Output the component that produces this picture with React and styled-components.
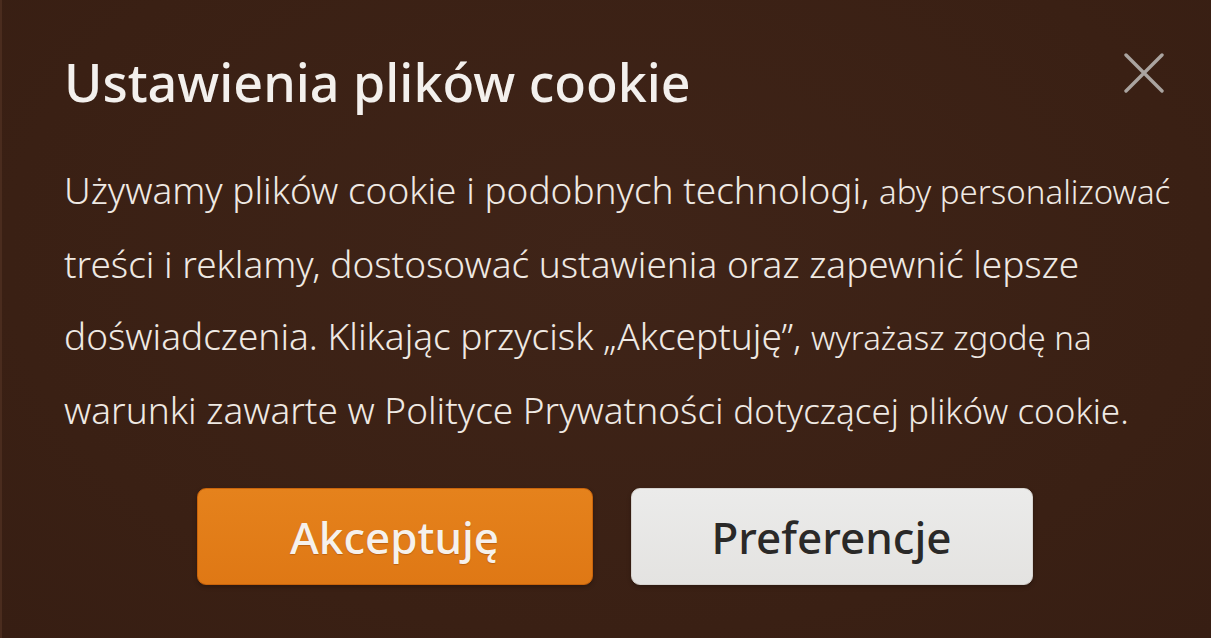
import React from 'react';
import styled, { createGlobalStyle } from 'styled-components';

const GlobalStyle = createGlobalStyle`
  html, body {
    margin: 0;
    padding: 0;
    background: #3b2115;
  }
  * { box-sizing: border-box; }
`;

const Dialog = styled.div`
  min-height: 100vh;
  display: flex;
  flex-direction: column;
  padding: 52px 46px 0 62px;
  background: radial-gradient(ellipse at 50% 40%, #3f2418 0%, #3a2014 70%, #371e13 100%);
  border-left: 2px solid #4a2c1e;
  font-family: "Noto Sans", "Open Sans", sans-serif;
  color: #f1ece7;
`;

const Header = styled.div`
  display: flex;
  justify-content: space-between;
  align-items: flex-start;
`;

const Title = styled.h2`
  margin: 0;
  font-size: 52px;
  line-height: 60px;
  font-weight: 500;
  color: #f3f0ed;
`;

const CloseButton = styled.button`
  background: none;
  border: none;
  padding: 0;
  width: 42px;
  height: 42px;
  cursor: pointer;
  display: flex;
  align-items: center;
  justify-content: center;
`;

const Text = styled.p`
  margin: 42px 0 0;
  font-size: 37px;
  line-height: 72px;
  font-weight: 300;
  color: #efe9e3;
  white-space: nowrap;
`;

const Small = styled.span`
  font-size: ${p => p.$size || 33}px;
`;

const Actions = styled.div`
  display: flex;
  justify-content: center;
  gap: 38px;
  margin-top: 41px;
`;

const Button = styled.button`
  width: ${p => p.$w}px;
  height: 97px;
  border-radius: 9px;
  font-family: inherit;
  font-size: 44px;
  font-weight: 500;
  cursor: pointer;
  border: 1px solid ${p => (p.$primary ? '#c9640c' : '#d6d3cf')};
  background: ${p =>
    p.$primary
      ? 'linear-gradient(180deg, #e5821c 0%, #df7815 100%)'
      : 'linear-gradient(180deg, #ebebea 0%, #e4e3e1 100%)'};
  color: ${p => (p.$primary ? '#f6f1ec' : '#2a2928')};
  text-shadow: ${p => (p.$primary ? '0 1px 1px rgba(120,50,0,0.35)' : 'none')};
  box-shadow: 0 2px 4px rgba(0,0,0,0.25);
`;

const CloseIcon = () => (
  <svg width="40" height="40" viewBox="0 0 40 40">
    <path d="M2 2 L38 38 M38 2 L2 38" stroke="#aaa4a0" strokeWidth="3.4" strokeLinecap="round" />
  </svg>
);

export default function App() {
  return (
    <>
      <GlobalStyle />
      <Dialog>
        <Header>
          <Title>Ustawienia plików cookie</Title>
          <CloseButton aria-label="Zamknij">
            <CloseIcon />
          </CloseButton>
        </Header>
        <Text>
          Używamy plików cookie i podobnych technologi, <Small>aby personalizować</Small>
          <br />
          treści i reklamy, dostosować ustawienia oraz zapewnić lepsze
          <br />
          doświadczenia. Klikając przycisk „Akceptuję”, <Small>wyrażasz zgodę na</Small>
          <br />
          warunki zawarte w Polityce Prywatności <Small $size={35}>dotyczącej plików cookie.</Small>
        </Text>
        <Actions>
          <Button $primary $w={396}>Akceptuję</Button>
          <Button $w={402}>Preferencje</Button>
        </Actions>
      </Dialog>
    </>
  );
}
